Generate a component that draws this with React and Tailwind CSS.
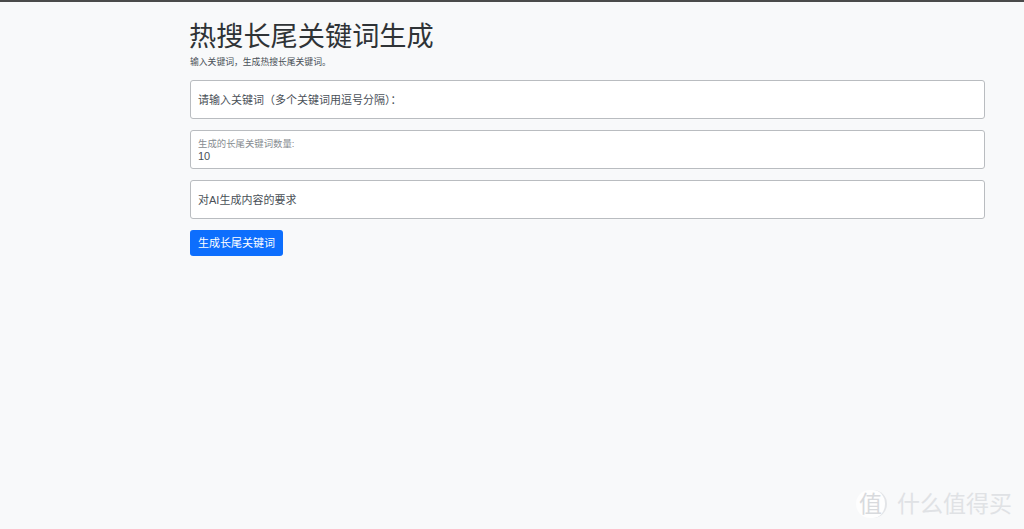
import React from "react";

const fontStack = "font-['Liberation_Sans','Noto_Sans_CJK_SC',sans-serif]";

function Field({ children }) {
  return (
    <div className="h-[39px] bg-white border border-[#b9bcc0] rounded-[3px] pl-[7px] pr-2 flex flex-col justify-center text-[11px] text-[#495057]">
      {children}
    </div>
  );
}

function Watermark() {
  return (
    <div className="absolute right-[12px] bottom-[11px] flex items-center gap-[10px] text-[#e0e2e5]">
      <div className="w-[31px] h-[28px] rounded-full bg-white/80 border-r-2 border-[#e3e5e8] flex items-center justify-center text-[23px] leading-none text-[#d8dadd]">
        值
      </div>
      <span className="text-[23px] leading-none">什么值得买</span>
    </div>
  );
}

export default function App() {
  return (
    <div className={`relative min-h-[529px] bg-[#f8f9fa] border-t-2 border-t-[#4a4a4a] overflow-hidden ${fontStack}`}>
      <div className="w-[795px] ml-[190px] pt-[19px]">
        <h1 className="text-[27.2px] leading-[32px] font-normal text-[#2f3336] -ml-px">热搜长尾关键词生成</h1>
        <p className="mt-[3px] text-[8.8px] leading-[12px] text-[#495057]">输入关键词，生成热搜长尾关键词。</p>

        <div className="mt-[12px] flex flex-col gap-[11px]">
          <Field><span className="pt-[2px]">请输入关键词（多个关键词用逗号分隔）：</span></Field>
          <Field>
            <label className="text-[9.4px] leading-[11px] text-[#868b90] mt-[2px]">生成的长尾关键词数量:</label>
            <span className="text-[11px] leading-[14px]">10</span>
          </Field>
          <Field><span className="pt-[2px]">对AI生成内容的要求</span></Field>
        </div>

        <button className="mt-[11px] w-[93px] h-[26px] pt-px bg-[#0d6efd] text-white text-[11px] rounded-[3px] flex items-center justify-center">
          生成长尾关键词
        </button>
      </div>
      <Watermark />
    </div>
  );
}
